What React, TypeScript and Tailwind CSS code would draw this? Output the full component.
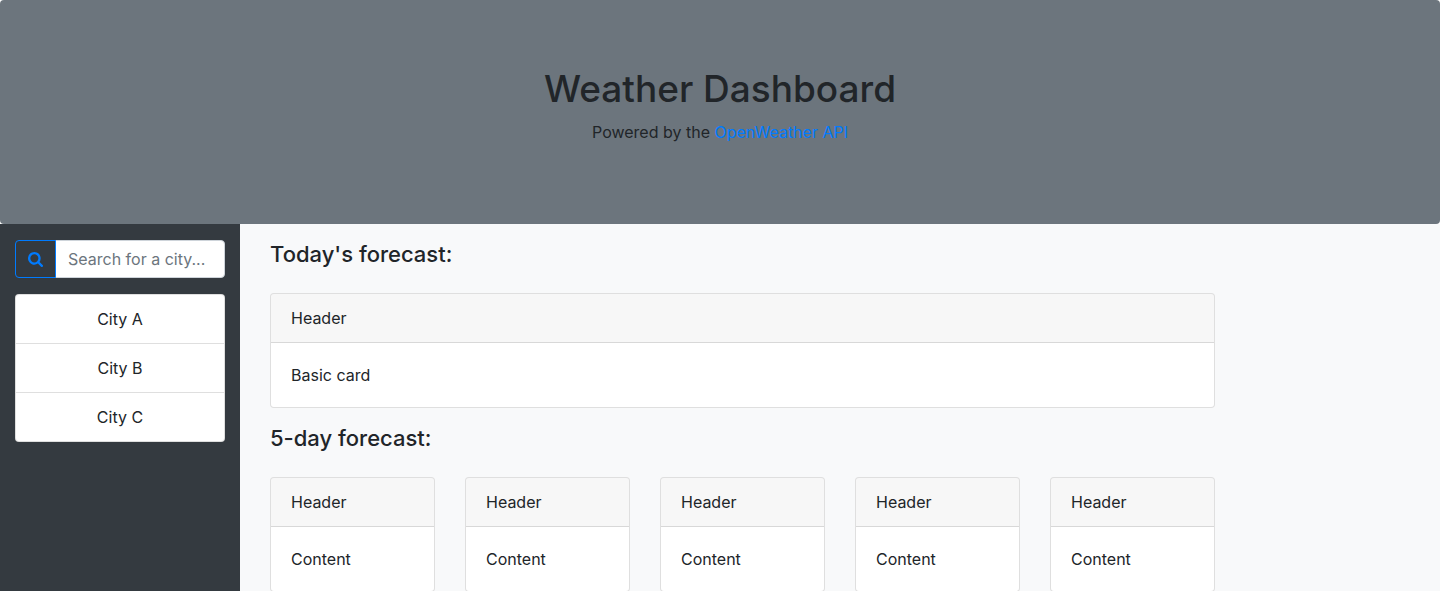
import React from "react";

const cities: string[] = ["City A", "City B", "City C"];
const days: number[] = [1, 2, 3, 4, 5];

function SearchIcon() {
  return (
    <svg viewBox="64 128 1664 1664" className="size-[15px]" fill="currentColor" aria-hidden="true">
      <path d="M1216 832q0-185-131.5-316.5t-316.5-131.5-316.5 131.5-131.5 316.5 131.5 316.5 316.5 131.5 316.5-131.5 131.5-316.5zm512 832q0 52-38 90t-90 38q-54 0-90-38l-343-342q-179 124-399 124-143 0-273.5-55.5t-225-150-150-225-55.5-273.5 55.5-273.5 150-225 225-150 273.5-55.5 273.5 55.5 225 150 150 225 55.5 273.5q0 220-124 399l343 343q37 37 37 90z" />
    </svg>
  );
}

function Card({ title, body }: { title: string; body: string }) {
  return (
    <article className="overflow-hidden rounded border border-black/[0.125] bg-white">
      <header className="border-b border-black/[0.125] bg-black/[0.03] px-5 py-3">{title}</header>
      <p className="p-5">{body}</p>
    </article>
  );
}

export default function App() {
  return (
    <div className="flex min-h-screen flex-col bg-white font-[Inter,'Liberation_Sans',sans-serif] text-base leading-6 text-[#212529]">
      <header className="shrink-0 rounded bg-[#6c757d] px-8 py-16 text-center">
        <h1 className="mb-1.5 text-[37px] leading-[50px] font-medium">Weather Dashboard</h1>
        <p className="mb-4">
          Powered by the{" "}
          <a href="#api" className="text-[#007bff]">
            OpenWeather API
          </a>
        </p>
      </header>
      <div className="flex grow">
        <aside className="w-1/6 shrink-0 bg-[#343a40] px-[15px] pt-4">
          <form className="mb-4 flex h-[38px]" onSubmit={(e) => e.preventDefault()}>
            <button
              type="submit"
              aria-label="Search"
              className="relative z-10 flex shrink-0 items-center rounded-l border border-[#007bff] px-3 text-[#007bff]"
            >
              <SearchIcon />
            </button>
            <input
              type="text"
              aria-label="City"
              placeholder="Search for a city..."
              className="-ml-px min-w-0 grow rounded-r border border-[#ced4da] bg-white px-3 placeholder:text-[#6c757d]"
            />
          </form>
          <ul className="divide-y divide-black/[0.125] overflow-hidden rounded border border-black/[0.125] bg-white text-center">
            {cities.map((city) => (
              <li key={city} className="px-5 py-3">
                {city}
              </li>
            ))}
          </ul>
        </aside>
        <main className="grow bg-[#f8f9fa] px-[15px] pt-4">
          <div className="w-5/6 px-[15px]">
            <h2 className="mb-6 text-[22px] leading-[29px] font-medium">Today's forecast:</h2>
            <Card title="Header" body="Basic card" />
            <h2 className="mt-4 mb-6 text-[22px] leading-[29px] font-medium">5-day forecast:</h2>
            <div className="grid grid-cols-5 gap-[30px]">
              {days.map((day) => (
                <Card key={day} title="Header" body="Content" />
              ))}
            </div>
          </div>
        </main>
      </div>
    </div>
  );
}
